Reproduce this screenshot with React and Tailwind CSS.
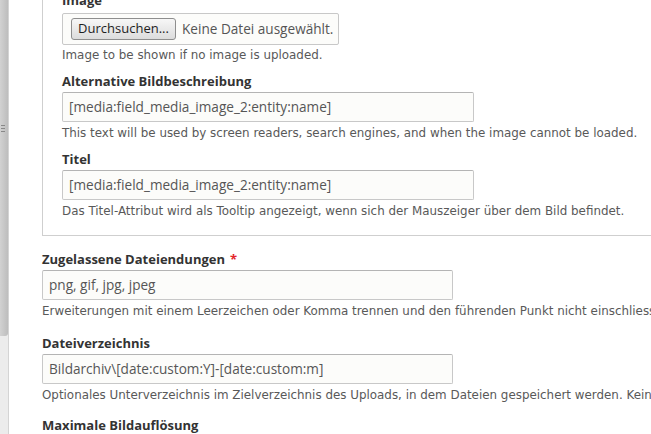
import React from "react";

const labelCls = "block h-[18px] leading-[18px] text-[13px] font-bold text-[#333] whitespace-nowrap";
const descCls = "block h-[14px] leading-[14px] text-[11.9px] text-[#595959] whitespace-nowrap";
const inputCls =
  "h-[30px] rounded-[2px] border border-[#c8c8c8] border-t-[#b4b4b4] bg-[#fcfcfa] px-[6px] flex items-center text-[13.6px] text-[#565656] whitespace-nowrap";

const sans = { fontFamily: '"DejaVu Sans", "Liberation Sans", sans-serif' };
const inputFont = { fontFamily: '"Open Sans", "Liberation Sans", sans-serif' };
const labelFont = { fontFamily: '"Open Sans", "Liberation Sans", sans-serif' };

const Field = ({ label, value, desc, required, width }) => (
  <div>
    <label className={labelCls} style={labelFont}>
      {label}
      {required && <span className="ml-[5px] text-[#e3262b]">*</span>}
    </label>
    <div className={`mt-[2px] ${inputCls} ${width}`} style={inputFont}>
      {value}
    </div>
    <div className={`mt-[4px] ${descCls}`}>{desc}</div>
  </div>
);

export default function App() {
  return (
    <div className="w-[651px] h-[434px] overflow-hidden bg-white flex" style={sans}>
      {/* side scroll strip */}
      <div className="w-[9px] h-full shrink-0 flex flex-col bg-[#ececec] border-r border-[#d4d4d4]">
        <div className="h-[336px] w-[8px] rounded-br-[3px] bg-gradient-to-r from-[#d2d2d2] to-[#bdbdbd] flex flex-col justify-center">
          <div className="-mt-[80px] flex flex-col gap-[2px] pl-[1px]">
            <div className="h-[1px] w-[4px] bg-[#888]" />
            <div className="h-[1px] w-[4px] bg-[#888]" />
            <div className="h-[1px] w-[4px] bg-[#888]" />
          </div>
        </div>
      </div>

      <div className="flex-1 pl-[33px] min-w-0">
        {/* fieldset (scrolled, top cut off) */}
        <div className="-mt-[9px] border-l border-b border-[#cfcfcf] pl-[19px] pb-[17px]">
          <label className={labelCls} style={labelFont}>Image</label>
          <div className="mt-[4px] h-[32px] w-[277px] rounded-[2px] border border-[#c8c8c8] bg-[#fcfcfa] flex items-center pl-[8px]" style={inputFont}>
            <div className="h-[22px] w-[105px] rounded-[3px] border border-[#8e8e8e] bg-gradient-to-b from-[#f7f7f7] to-[#dcdcdc] flex items-center justify-center text-[13px] text-[#1e1e1e]">
              Durchsuchen...
            </div>
            <span className="ml-[6px] text-[13.6px] text-[#555] whitespace-nowrap">Keine Datei ausgewählt.</span>
          </div>
          <div className={`mt-[3px] ${descCls}`}>Image to be shown if no image is uploaded.</div>

          <div className="mt-[10px]">
            <Field
              label="Alternative Bildbeschreibung"
              value="[media:field_media_image_2:entity:name]"
              desc="This text will be used by screen readers, search engines, and when the image cannot be loaded."
              width="w-[412px]"
            />
          </div>
          <div className="mt-[10px]">
            <Field
              label="Titel"
              value="[media:field_media_image_2:entity:name]"
              desc="Das Titel-Attribut wird als Tooltip angezeigt, wenn sich der Mauszeiger über dem Bild befindet."
              width="w-[412px]"
            />
          </div>
        </div>

        <div className="mt-[14px]">
          <Field
            label="Zugelassene Dateiendungen"
            required
            value="png, gif, jpg, jpeg"
            desc="Erweiterungen mit einem Leerzeichen oder Komma trennen und den führenden Punkt nicht einschliessen."
            width="w-[411px]"
          />
        </div>
        <div className="mt-[16px]">
          <Field
            label="Dateiverzeichnis"
            value="Bildarchiv\[date:custom:Y]-[date:custom:m]"
            desc="Optionales Unterverzeichnis im Zielverzeichnis des Uploads, in dem Dateien gespeichert werden. Keine führenden oder abschliessenden Schrägstriche."
            width="w-[411px]"
          />
        </div>
        <div className="mt-[14px]">
          <label className={labelCls} style={labelFont}>Maximale Bildauflösung</label>
        </div>
      </div>
    </div>
  );
}
